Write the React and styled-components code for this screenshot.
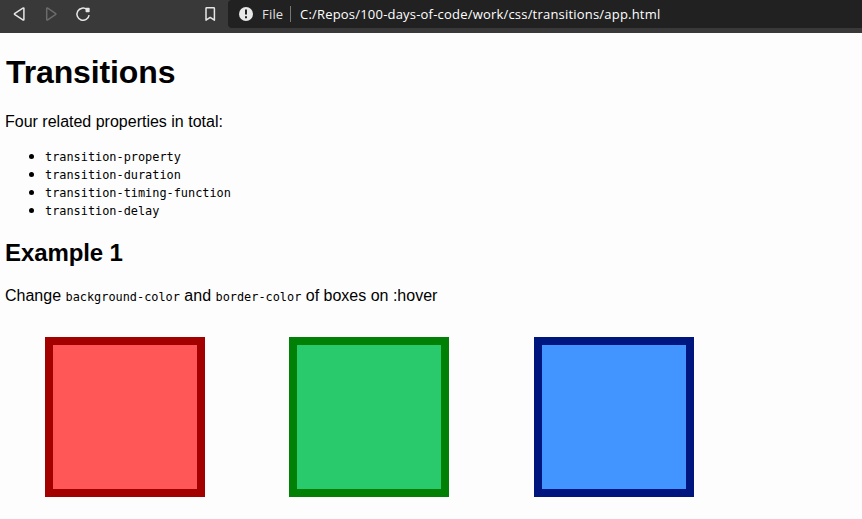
import React from "react";
import styled, { createGlobalStyle } from "styled-components";

const GlobalStyle = createGlobalStyle`
  * { box-sizing: border-box; }
  body {
    margin: 0;
    height: 519px;
    overflow: hidden;
    background: #fdfdfd;
    color: #000;
    font-family: "Liberation Sans", Arial, sans-serif;
    font-size: 16px;
  }
`;

const Toolbar = styled.header`
  display: flex;
  height: 33px;
  background: #393939;
`;

const Controls = styled.nav`
  display: flex;
  flex: none;
  width: 228px;
  height: 28px;
  padding: 0 10px 0 11px;
  align-items: center;
`;

const IconButton = styled.button`
  display: flex;
  padding: 0;
  border: 0;
  background: none;
  color: ${(p) => (p.$dim ? "#6b6b6b" : "#e6e6e6")};
  margin-left: ${(p) => p.$gap || "0"};
`;

const AddressBar = styled.div`
  display: flex;
  flex: 1;
  height: 28px;
  padding-left: 10px;
  align-items: center;
  border-radius: 4px 0 0 4px;
  background: #212121;
  font-family: "Open Sans", "Noto Sans", sans-serif;
  font-size: 13px;
  line-height: 28px;
  white-space: nowrap;
`;

const Scheme = styled.span`
  width: 28px;
  margin-left: 8px;
  color: #e0e0e0;
  letter-spacing: 0.2px;
`;

const Divider = styled.span`
  width: 1px;
  height: 16px;
  margin-right: 9px;
  background: #777;
`;

const Address = styled.span`
  color: #fff;
  letter-spacing: 0.2px;
`;

const Page = styled.main`
  padding: 21px 5px 0;
`;

const Title = styled.h1`
  margin: 0 0 22px;
  padding-left: 1px;
  font-size: 32px;
  line-height: 37px;
  letter-spacing: -0.12px;
`;

const Subtitle = styled.h2`
  margin: 0 0 21px;
  font-size: 24px;
  line-height: 27px;
  letter-spacing: -0.1px;
`;

const Paragraph = styled.p`
  margin: 0;
  line-height: 18px;
  white-space: nowrap;
`;

const Code = styled.code`
  font-family: "DejaVu Sans Mono", monospace;
  font-size: 11.88px;
  line-height: 1;
`;

const PropertyList = styled.ul`
  margin: 16px 0 20px;
  padding-left: 40px;
  line-height: 18px;
`;

const Boxes = styled.section`
  display: flex;
  gap: 84.4px;
  padding: 32px 0 0 40px;
`;

const Box = styled.div`
  flex: none;
  width: 160px;
  height: 160px;
  border: 8px solid ${(p) => p.$border};
  background: ${(p) => p.$fill};
  transition: background-color 0.5s, border-color 0.5s;
  &:hover {
    border-color: ${(p) => p.$fill};
    background: ${(p) => p.$border};
  }
`;

const Icon = ({ children }) => (
  <svg width="16" height="16" viewBox="0 0 16 16" fill="none" stroke="currentColor" strokeWidth="1.5" strokeLinejoin="round">
    {children}
  </svg>
);

const properties = [
  "transition-property",
  "transition-duration",
  "transition-timing-function",
  "transition-delay",
];

const boxes = [
  { fill: "#ff5757", border: "#a30000" },
  { fill: "#29ca6b", border: "#008005" },
  { fill: "#4294ff", border: "#00167f" },
];

export default function App() {
  return (
    <>
      <GlobalStyle />
      <Toolbar>
        <Controls>
          <IconButton aria-label="Back">
            <Icon><path d="M12.9 2.2v11.6q-.5.3-1 0L3.9 8.7q-.9-.7 0-1.4L11.9 2.2q.5-.3 1 0Z" /></Icon>
          </IconButton>
          <IconButton aria-label="Forward" $dim $gap="16px">
            <Icon><path d="M3.7 2.2v11.6q.5.3 1 0L12.4 8.7q.9-.7 0-1.4L4.7 2.2q-.5-.3-1 0Z" /></Icon>
          </IconButton>
          <IconButton aria-label="Reload" $gap="16px">
            <Icon>
              <path d="M12 3.5A6.1 6.1 0 1 0 14.1 9.1" />
              <path d="M11.3 2.6h2.6v2.9h-2.6Z" fill="currentColor" />
            </Icon>
          </IconButton>
          <IconButton aria-label="Bookmark" $gap="111px">
            <Icon><path d="M4 2.4q0-.7.7-.7h7q.7 0 .7.7v11.8L8.2 11.4 4 14.2Z" /></Icon>
          </IconButton>
        </Controls>
        <AddressBar>
          <svg width="16" height="16" viewBox="0 0 16 16">
            <circle cx="8" cy="8" r="7" fill="#e8e8e8" />
            <path d="M8 3.6v5M8 10.2v2" stroke="#212121" strokeWidth="2" />
          </svg>
          <Scheme>File</Scheme>
          <Divider />
          <Address>C:/Repos/100-days-of-code/work/css/transitions/app.html</Address>
        </AddressBar>
      </Toolbar>
      <Page>
        <Title>Transitions</Title>
        <Paragraph>Four related properties in total:</Paragraph>
        <PropertyList>
          {properties.map((name) => (
            <li key={name}><Code>{name}</Code></li>
          ))}
        </PropertyList>
        <Subtitle>Example 1</Subtitle>
        <Paragraph>
          Change <Code>background-color</Code> and <Code>border-color</Code> of boxes on :hover
        </Paragraph>
        <Boxes>
          {boxes.map((box) => (
            <Box key={box.fill} $fill={box.fill} $border={box.border} />
          ))}
        </Boxes>
      </Page>
    </>
  );
}
